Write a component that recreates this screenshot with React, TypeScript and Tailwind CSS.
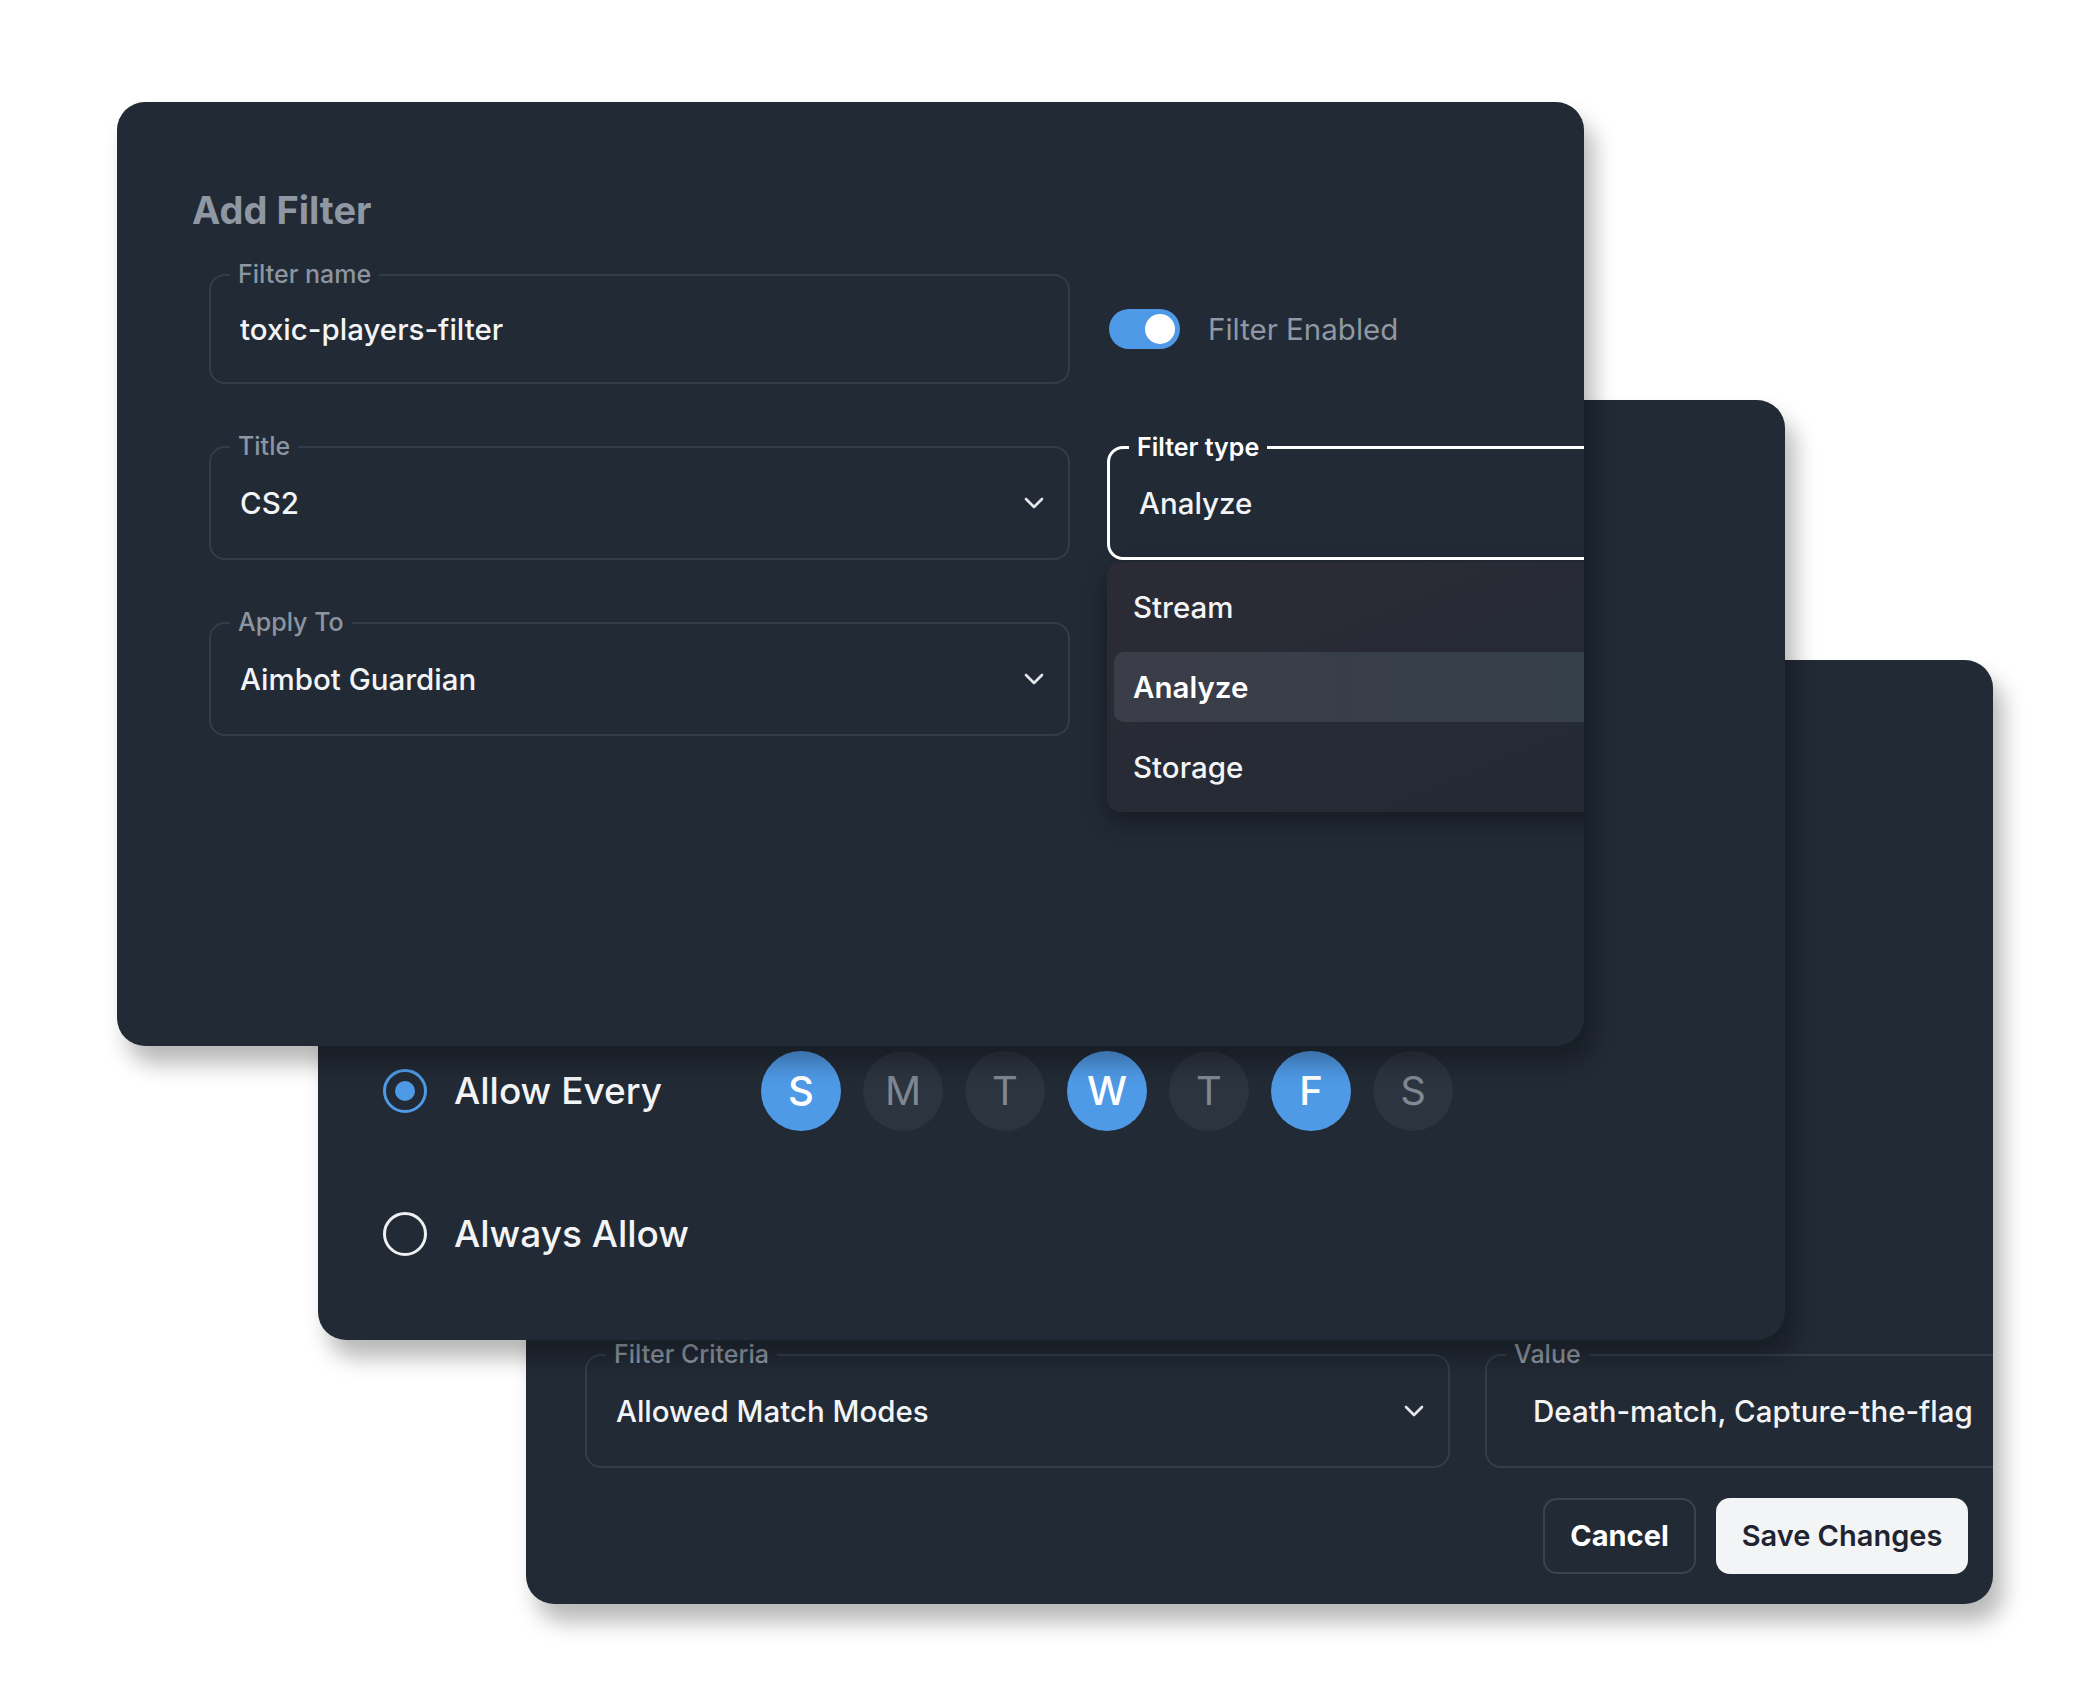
import React from 'react';

const font = { fontFamily: 'Inter, "Noto Sans", sans-serif' };

function Chevron() {
  return (
    <svg width="20" height="12" viewBox="0 0 20 12" fill="none" className="shrink-0">
      <path d="M2 2l8 8 8-8" stroke="#e5e7eb" strokeWidth="2.6" strokeLinecap="round" strokeLinejoin="round" />
    </svg>
  );
}

// outlined field with the label sitting on the top border
function Field({
  label,
  value,
  height = 'h-[114px]',
  width = 'w-[861px]',
  select = false,
  focused = false,
  valuePad = 'pl-[29px]',
}: {
  label: string;
  value: string;
  height?: string;
  width?: string;
  select?: boolean;
  focused?: boolean;
  valuePad?: string;
}) {
  return (
    <div
      className={`relative ${width} ${height} shrink-0 rounded-[16px] ${
        focused ? 'border-[3px] border-white' : 'border-2 border-[#343d48]'
      } flex items-center ${valuePad} pr-[24px]`}
    >
      <span
        className={`absolute -top-[16px] left-[19px] px-[8px] bg-[#222a35] text-[25px] leading-[28px] ${
          focused ? 'text-white font-semibold' : 'text-[#8c95a0] font-medium'
        }`}
      >
        {label}
      </span>
      <span className="flex-1 text-[29.5px] font-medium text-[#f3f4f6] whitespace-nowrap">{value}</span>
      {select && <Chevron />}
    </div>
  );
}

const days = [
  { d: 'S', on: true },
  { d: 'M', on: false },
  { d: 'T', on: false },
  { d: 'W', on: true },
  { d: 'T', on: false },
  { d: 'F', on: true },
  { d: 'S', on: false },
];

export default function App() {
  return (
    <div className="relative w-[2100px] h-[1700px] bg-white overflow-hidden" style={font}>
      {/* back card: criteria + actions */}
      <div className="absolute left-[526px] top-[660px] w-[1467px] h-[944px] rounded-[28px] bg-[#222a35] overflow-hidden shadow-[10px_18px_22px_rgba(0,0,0,0.28)]">
        <div className="flex flex-col pt-[694px] pl-[59px]">
          <div className="flex gap-[35px]">
            <Field label="Filter Criteria" value="Allowed Match Modes" width="w-[865px]" select />
            <Field label="Value" value="Death-match, Capture-the-flag" width="w-[600px]" valuePad="pl-[46px]" />
          </div>
          <div className="flex justify-end gap-[20px] pr-[25px] mt-[30px]">
            <button className="h-[76px] w-[153px] rounded-[14px] border-2 border-[#3a434e] text-[29px] font-bold text-white">
              Cancel
            </button>
            <button className="h-[76px] w-[252px] rounded-[14px] bg-[#f3f4f6] text-[29px] font-semibold text-[#1f2430]">
              Save Changes
            </button>
          </div>
        </div>
      </div>

      {/* middle card: schedule */}
      <div className="absolute left-[318px] top-[400px] w-[1467px] h-[940px] rounded-[28px] bg-[#222a35] overflow-hidden shadow-[10px_18px_22px_rgba(0,0,0,0.28)]">
        <div className="flex flex-col gap-[63px] pt-[651px] pl-[65px]">
          <div className="flex items-center h-[80px]">
            <div className="flex items-center w-[378px]">
              <span className="w-[44px] h-[44px] rounded-full border-[3px] border-[#4f9ae6] flex items-center justify-center">
                <span className="w-[20px] h-[20px] rounded-full bg-[#4f9ae6]" />
              </span>
              <span className="ml-[27px] text-[37px] font-medium text-[#f3f4f6]">Allow Every</span>
            </div>
            <div className="flex gap-[22px]">
              {days.map((x, i) => (
                <span
                  key={i}
                  className={`w-[80px] h-[80px] rounded-full flex items-center justify-center text-[40px] ${
                    x.on ? 'bg-[#4f9ae6] text-white font-medium' : 'bg-[#2c343f] text-[#7f8893]'
                  }`}
                >
                  {x.d}
                </span>
              ))}
            </div>
          </div>
          <div className="flex items-center h-[80px]">
            <span className="w-[44px] h-[44px] rounded-full border-[3px] border-[#eef0f2]" />
            <span className="ml-[27px] text-[37px] font-medium text-[#f3f4f6]">Always Allow</span>
          </div>
        </div>
      </div>

      {/* front card: add filter */}
      <div className="absolute left-[117px] top-[102px] w-[1467px] h-[944px] rounded-[28px] bg-[#222a35] overflow-hidden shadow-[10px_18px_22px_rgba(0,0,0,0.28)]">
        <h2 className="pt-[85px] pl-[75px] text-[38px] leading-[46px] font-bold text-[#8e97a2]">Add Filter</h2>
        <div className="flex gap-[37px] pl-[92px] mt-[41px]">
          <div className="flex flex-col gap-[62px]">
            <Field label="Filter name" value="toxic-players-filter" height="h-[110px]" />
            <Field label="Title" value="CS2" select />
            <Field label="Apply To" value="Aimbot Guardian" select />
          </div>
          <div className="flex flex-col w-[620px] shrink-0">
            <div className="h-[110px] flex items-center">
              <span className="ml-[2px] w-[71px] h-[40px] rounded-full bg-[#4f9ae6] flex items-center justify-end pr-[5px]">
                <span className="w-[30px] h-[30px] rounded-full bg-white" />
              </span>
              <span className="ml-[28px] text-[29.5px] text-[#8f98a3]">Filter Enabled</span>
            </div>
            <div className="mt-[62px]">
              <Field label="Filter type" value="Analyze" width="w-[620px]" focused />
            </div>
            <div className="mt-[2px] rounded-[14px] bg-gradient-to-br from-[#2b2b35] to-[#222a34] shadow-[0_10px_24px_rgba(0,0,0,0.35)] px-[7px] py-[10px] flex flex-col gap-[10px]">
              <div className="h-[70px] flex items-center px-[19px] text-[29.5px] font-medium text-[#f3f4f6]">Stream</div>
              <div className="h-[70px] flex items-center px-[19px] rounded-[10px] bg-gradient-to-r from-[#3b3d48] to-[#33404a] text-[29.5px] font-semibold text-white">
                Analyze
              </div>
              <div className="h-[70px] flex items-center px-[19px] text-[29.5px] font-medium text-[#f3f4f6]">Storage</div>
            </div>
          </div>
        </div>
      </div>
    </div>
  );
}
